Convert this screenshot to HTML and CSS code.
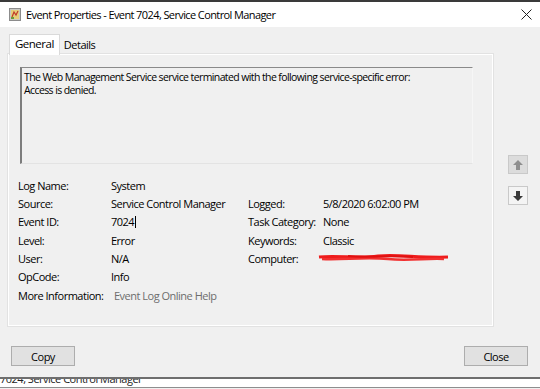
FILE: index.html
```html
<!DOCTYPE html>
<html lang="en">
<head>
  <meta charset="UTF-8" />
  <title>Event Properties</title>
  <link rel="stylesheet" href="styles.css">
</head>
<body>

<!-- Title bar -->
<div class="titlebar">
  <svg class="app-icon" width="12" height="13" viewBox="0 0 12 13">
    <rect x="0.5" y="0.5" width="11" height="12" fill="#c9c9c4" stroke="#8c8c8c"/>
    <rect x="2" y="2" width="8" height="9" fill="#e6cf7a"/>
    <path d="M3 9 L5 4 L7 7 L9 3" stroke="#c0392b" stroke-width="1.2" fill="none"/>
    <rect x="2" y="9" width="3" height="2" fill="#6a9a3a"/>
  </svg>
  <span class="title">Event Properties - Event 7024, Service Control Manager</span>
  <svg class="close-x" width="11" height="11" viewBox="0 0 11 11">
    <path d="M0.5 0.5 L10.5 10.5 M10.5 0.5 L0.5 10.5" stroke="#222" stroke-width="1"/>
  </svg>
</div>

<div class="dialog">
  <!-- Tabs -->
  <div class="tabs">
    <div class="tab active">General</div>
    <div class="tab">Details</div>
  </div>

  <div class="body-row">
    <div class="panel">
      <div class="desc">The Web Management Service service terminated with the following service-specific error:<br>Access is denied.</div>

      <div class="fields">
        <span>Log Name:</span><span>System</span><span></span><span></span>
        <span>Source:</span><span>Service Control Manager</span><span>Logged:</span><span>5/8/2020 6:02:00 PM</span>
        <span>Event ID:</span><span>7024<i class="caret"></i></span><span>Task Category:</span><span>None</span>
        <span>Level:</span><span>Error</span><span>Keywords:</span><span>Classic</span>
        <span>User:</span><span>N/A</span><span>Computer:</span>
        <span class="redacted">
          <svg width="132" height="10" viewBox="0 0 132 10">
            <path d="M1 4 C20 2 40 6 60 3 C80 1 100 5 130 4" stroke="#ee1c1c" stroke-width="3" fill="none"/>
            <path d="M4 6 C25 7 45 4 70 6 C90 8 110 5 126 6" stroke="#f23030" stroke-width="2.5" fill="none"/>
            <path d="M30 3 C50 5 70 2 95 4" stroke="#e01010" stroke-width="2" fill="none"/>
          </svg>
        </span>
        <span>OpCode:</span><span>Info</span><span></span><span></span>
        <span>More Information:</span><span class="link">Event Log Online Help</span><span></span><span></span>
      </div>
    </div>

    <div class="nav">
      <button class="nav-btn up">
        <svg width="10" height="10" viewBox="0 0 10 10"><path d="M5 0 L10 5 L7 5 L7 10 L3 10 L3 5 L0 5 Z" fill="#8e8e8e"/></svg>
      </button>
      <button class="nav-btn down">
        <svg width="10" height="10" viewBox="0 0 10 10"><path d="M5 10 L10 5 L7 5 L7 0 L3 0 L3 5 L0 5 Z" fill="#3a3a3a"/></svg>
      </button>
    </div>
  </div>

  <div class="actions">
    <button class="btn">Copy</button>
    <button class="btn">Close</button>
  </div>
</div>

<!-- window behind -->
<div class="behind"><span>7024, Service Control Manager</span></div>

</body>
</html>
```

FILE: styles.css
```css
* { margin: 0; padding: 0; box-sizing: border-box; }
body {
  font-family: 'Open Sans', 'Noto Sans', sans-serif;
  font-size: 11px;
  letter-spacing: -0.5px;
  color: #000;
  background: #f0f0f0;
  width: 540px;
  height: 389px;
  overflow: hidden;
}

.titlebar {
  height: 27px;
  background: #fff;
  border-top: 2px solid #3a3a3a;
  display: flex;
  align-items: center;
  padding-left: 9px;
}

.app-icon {
  margin-right: 5px;
}

.title {
  flex: 1;
  letter-spacing: -0.6px;
}

.close-x {
  margin-right: 8px;
}

.dialog {
  padding-top: 7px;
}

.tabs {
  display: flex;
  align-items: flex-end;
  padding-left: 9px;
  height: 20px;
}

.tab {
  height: 17px;
  padding: 0 4px;
  line-height: 16px;
}

.tab.active {
  height: 21px;
  padding: 0 5px;
  line-height: 18px;
  font-size: 11.5px;
  background: #fff;
  border: 1px solid #dadada;
  border-bottom: none;
  margin-bottom: -1px;
  position: relative;
}

.body-row {
  display: flex;
}

.panel {
  margin-left: 8px;
  width: 485px;
  height: 272px;
  border: 1px solid #fff;
  box-shadow: 0 0 0 1px #e2e2e2;
  padding: 12px 19px 0 9px;
}

.desc {
  margin-left: 2px;
  height: 97px;
  border-top: 1px solid #8a8a8a;
  border-left: 2px solid #7d7d7d;
  border-bottom: 1px solid #e3e3e3;
  border-right: 1px solid #f6f6f6;
  padding: 3px 2px;
  font-size: 10.5px;
  letter-spacing: -0.6px;
  line-height: 13px;
}

.fields {
  margin-top: 12px;
  display: grid;
  grid-template-columns: 93px 137px 75px 1fr;
  grid-auto-rows: 18.33px;
  align-items: center;
}

.caret {
  display: inline-block;
  width: 1px;
  height: 12px;
  margin-left: 1px;
  background: #000;
  vertical-align: -2px;
}

.redacted {
  margin-left: -5px;
  display: flex;
  align-items: center;
}

.link {
  color: #6d6d6d;
  padding-left: 3px;
}

.nav {
  display: flex;
  flex-direction: column;
  gap: 12px;
  padding: 101px 0 0 15px;
}

.nav-btn {
  width: 20px;
  height: 19px;
  border: 1px solid #c9c9c9;
  display: flex;
  align-items: center;
  justify-content: center;
}

.nav-btn.up {
  background: #dcdcdc;
}

.nav-btn.down {
  background: #f4f4f4;
}

.actions {
  display: flex;
  justify-content: space-between;
  padding: 20px 12px 0 11px;
}

.btn {
  width: 64px;
  height: 20px;
  background: #e1e1e1;
  border: 1px solid #adadad;
  font-family: inherit;
  font-size: 11px;
  letter-spacing: -0.5px;
  color: #000;
}

.behind {
  margin-top: 11px;
  height: 11px;
  background: #fff;
  border-top: 2px solid #6e6e6e;
  border-bottom: 1px solid #8e8e8e;
  overflow: hidden;
  font-size: 11px;
  line-height: 11px;
}

.behind span {
  display: block;
  margin-top: -6px;
  color: #222;
}
```
